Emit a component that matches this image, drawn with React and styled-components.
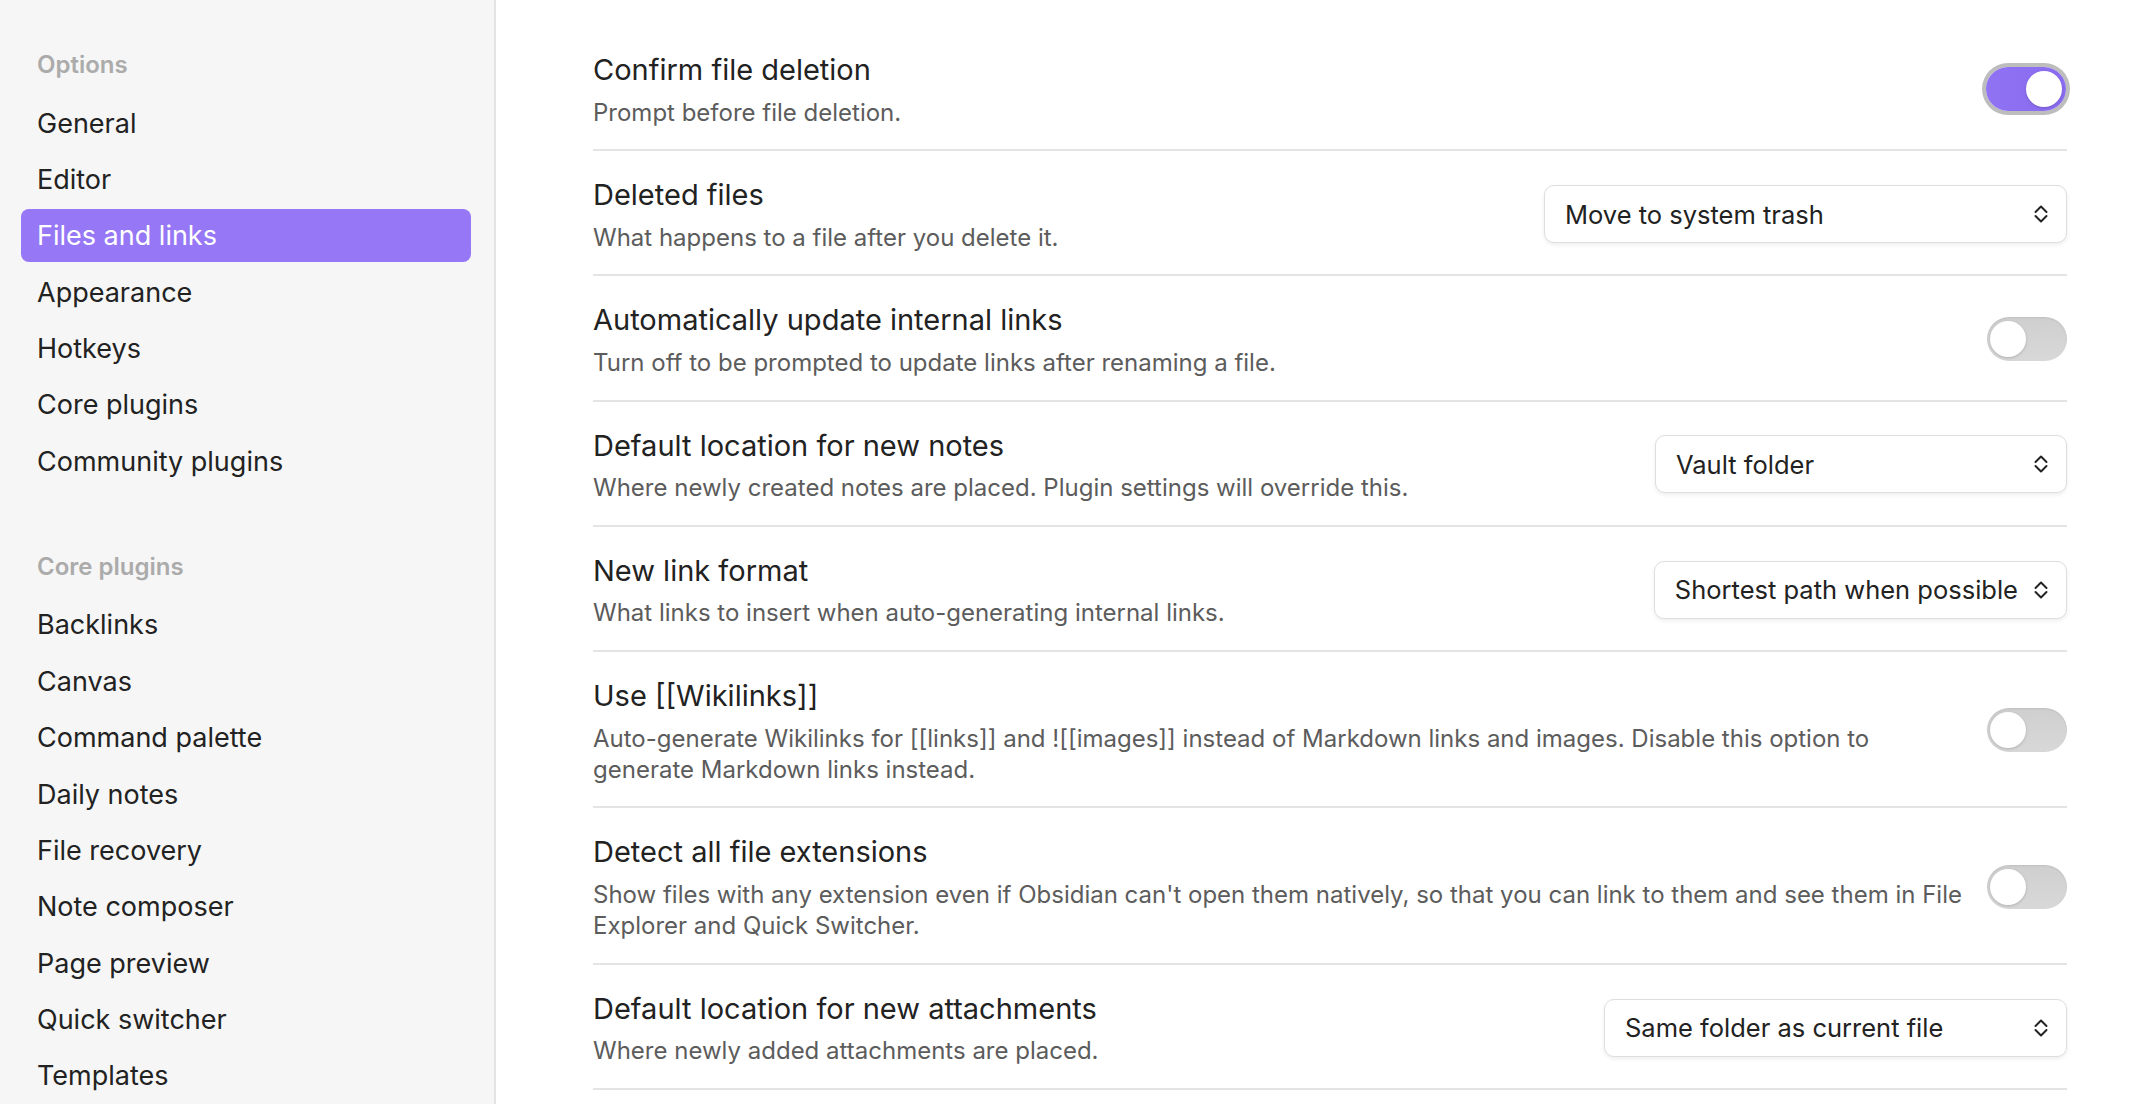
import React from "react";
import styled, { createGlobalStyle } from "styled-components";

const GlobalStyle = createGlobalStyle`
  html, body { margin: 0; padding: 0; }
  body {
    font-family: Inter, "Noto Sans", "Liberation Sans", sans-serif;
    background: #ffffff;
    color: #222222;
    -webkit-font-smoothing: antialiased;
  }
`;

const Layout = styled.div`
  display: flex;
  width: 2132px;
  height: 1104px;
  overflow: hidden;
`;

const Sidebar = styled.nav`
  box-sizing: border-box;
  width: 496px;
  flex: none;
  height: 100%;
  background: #f6f6f6;
  border-right: 2px solid #e4e4e4;
  padding: 49px 23px 0 21px;
  display: flex;
  flex-direction: column;
`;

const GroupHeader = styled.div`
  height: 32px;
  line-height: 32px;
  padding-left: 16px;
  font-size: 24px;
  font-weight: 600;
  color: #ababab;
  margin-top: ${(p) => (p.$first ? "0" : "63px")};
  margin-bottom: 15.5px;
`;

const NavList = styled.div`
  display: flex;
  flex-direction: column;
  gap: 3.4px;
`;

const NavItem = styled.div`
  height: 53px;
  line-height: 53px;
  padding-left: 16px;
  border-radius: 8px;
  font-size: 27px;
  color: ${(p) => (p.$active ? "#ffffff" : "#222222")};
  background: ${(p) => (p.$active ? "#9677f5" : "transparent")};
  white-space: nowrap;
`;

const Main = styled.main`
  flex: 1;
  box-sizing: border-box;
  height: 100%;
  padding: 26px 65px 0 97px;
  overflow: hidden;
`;

const Row = styled.div`
  display: flex;
  align-items: center;
  gap: 14px;
  padding: 24px 0 21.5px;
  border-bottom: 2px solid #e4e4e4;
`;

const Info = styled.div`
  flex: 1;
  min-width: 0;
`;

const Title = styled.div`
  font-size: 29px;
  line-height: 40px;
  color: #222222;
`;

const Desc = styled.div`
  margin-top: 6.5px;
  font-size: 24px;
  line-height: 31.2px;
  color: #5c5c5c;
`;

const Track = styled.div`
  position: relative;
  flex: none;
  width: 80px;
  height: 44px;
  border-radius: 22px;
  background: ${(p) =>
    p.$on
      ? "linear-gradient(90deg, #8f73f3, #8a6cf0)"
      : "linear-gradient(180deg, #cfcfcf, #d8d8d8)"};
  box-shadow: ${(p) =>
    p.$on ? "0 0 0 4px #bdbdbd" : "inset 0 1px 2px rgba(0,0,0,0.08)"};
  margin-right: ${(p) => (p.$on ? "1px" : "0")};
`;

const Knob = styled.div`
  position: absolute;
  top: 4px;
  left: ${(p) => (p.$on ? "40px" : "3px")};
  width: 36px;
  height: 36px;
  border-radius: 50%;
  background: #ffffff;
  box-shadow: 0 1px 3px rgba(0, 0, 0, 0.18);
`;

const SelectBox = styled.div`
  flex: none;
  box-sizing: border-box;
  min-width: ${(p) => p.$width}px;
  height: 58px;
  display: flex;
  align-items: center;
  justify-content: space-between;
  gap: 16px;
  padding: 0 18px 0 20px;
  background: #ffffff;
  border: 1.5px solid #dedede;
  border-radius: 10px;
  box-shadow: 0 2px 4px rgba(0, 0, 0, 0.07);
  font-size: 25.5px;
  color: #222222;
  white-space: nowrap;
`;

const Chevrons = () => (
  <svg width="14" height="22" viewBox="0 0 14 22" fill="none">
    <path d="M1.5 9 L7 3.5 L12.5 9" stroke="#222" strokeWidth="2" strokeLinecap="round" strokeLinejoin="round" />
    <path d="M1.5 13 L7 18.5 L12.5 13" stroke="#222" strokeWidth="2" strokeLinecap="round" strokeLinejoin="round" />
  </svg>
);

const Toggle = ({ on }) => (
  <Track $on={on}>
    <Knob $on={on} />
  </Track>
);

const Select = ({ value, width }) => (
  <SelectBox $width={width}>
    <span>{value}</span>
    <Chevrons />
  </SelectBox>
);

const optionItems = [
  "General",
  "Editor",
  "Files and links",
  "Appearance",
  "Hotkeys",
  "Core plugins",
  "Community plugins",
];

const pluginItems = [
  "Backlinks",
  "Canvas",
  "Command palette",
  "Daily notes",
  "File recovery",
  "Note composer",
  "Page preview",
  "Quick switcher",
  "Templates",
];

const settings = [
  {
    name: "Confirm file deletion",
    desc: "Prompt before file deletion.",
    toggle: true,
  },
  {
    name: "Deleted files",
    desc: "What happens to a file after you delete it.",
    select: "Move to system trash",
    width: 523,
  },
  {
    name: "Automatically update internal links",
    desc: "Turn off to be prompted to update links after renaming a file.",
    toggle: false,
  },
  {
    name: "Default location for new notes",
    desc: "Where newly created notes are placed. Plugin settings will override this.",
    select: "Vault folder",
    width: 412,
  },
  {
    name: "New link format",
    desc: "What links to insert when auto-generating internal links.",
    select: "Shortest path when possible",
    width: 413,
  },
  {
    name: "Use [[Wikilinks]]",
    desc: "Auto-generate Wikilinks for [[links]] and ![[images]] instead of Markdown links and images. Disable this option to generate Markdown links instead.",
    toggle: false,
  },
  {
    name: "Detect all file extensions",
    desc: "Show files with any extension even if Obsidian can't open them natively, so that you can link to them and see them in File Explorer and Quick Switcher.",
    toggle: false,
  },
  {
    name: "Default location for new attachments",
    desc: "Where newly added attachments are placed.",
    select: "Same folder as current file",
    width: 463,
  },
];

export default function App() {
  return (
    <>
      <GlobalStyle />
      <Layout>
        <Sidebar>
          <GroupHeader $first>Options</GroupHeader>
          <NavList>
            {optionItems.map((item) => (
              <NavItem key={item} $active={item === "Files and links"}>
                {item}
              </NavItem>
            ))}
          </NavList>
          <GroupHeader>Core plugins</GroupHeader>
          <NavList>
            {pluginItems.map((item) => (
              <NavItem key={item}>{item}</NavItem>
            ))}
          </NavList>
        </Sidebar>
        <Main>
          {settings.map((s) => (
            <Row key={s.name}>
              <Info>
                <Title>{s.name}</Title>
                <Desc>{s.desc}</Desc>
              </Info>
              {s.select ? (
                <Select value={s.select} width={s.width} />
              ) : (
                <Toggle on={s.toggle} />
              )}
            </Row>
          ))}
        </Main>
      </Layout>
    </>
  );
}
